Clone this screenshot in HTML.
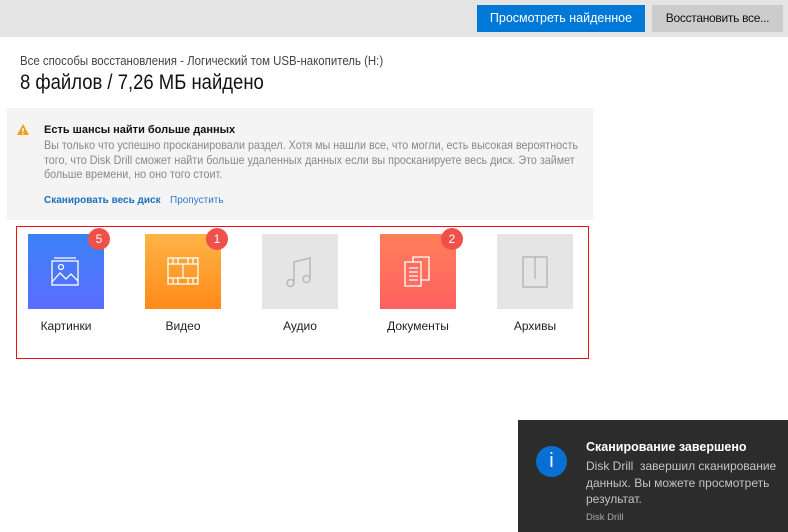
<!DOCTYPE html>
<html><head><meta charset="utf-8"><style>
*{margin:0;padding:0;box-sizing:border-box}
body{width:788px;height:532px;overflow:hidden;background:#fff;font-family:"Liberation Sans","DejaVu Sans",sans-serif;position:relative}
.a{position:absolute;white-space:nowrap}
.c{transform-origin:left center;transform:scaleX(.88)}
.tile{position:absolute;top:234px;width:76px;height:75px}
.lbl{position:absolute;top:319px;font-size:12px;color:#222;width:100px;text-align:center}
.badge{position:absolute;top:228px;width:22px;height:22px;border-radius:50%;background:#f0504a;color:#fff;font-size:12px;text-align:center;line-height:22px}
</style></head><body>
<div class="a" style="left:0;top:0;width:788px;height:37px;background:#e4e4e4"></div>
<div class="a" style="left:477px;top:5px;width:168px;height:27px;background:#0078d7;color:#fff;font-size:12.5px;line-height:27px;text-align:center">Просмотреть найденное</div>
<div class="a" style="left:652px;top:5px;width:131px;height:27px;background:#cccccc;color:#111;font-size:12px;line-height:27px;text-align:center;letter-spacing:-.3px">Восстановить все...</div>
<div class="a c" style="left:20px;top:53px;font-size:13px;color:#444">Все способы восстановления - Логический том USB-накопитель (H:)</div>
<div class="a c" style="left:20px;top:71px;font-size:21px;color:#111">8 файлов / 7,26 МБ найдено</div>
<div class="a" style="left:7px;top:108px;width:586px;height:112px;background:#f4f4f4"></div>
<svg class="a" style="left:17px;top:124px" width="12" height="11"><path d="M6 0L12 11H0Z" fill="#f0a020"/><rect x="5.3" y="4" width="1.4" height="4" fill="#fff"/><rect x="5.3" y="9" width="1.4" height="1.2" fill="#fff"/></svg>
<div class="a" style="left:44px;top:124px;font-size:11px;font-weight:bold;color:#111">Есть шансы найти больше данных</div>
<div class="a" style="left:44px;top:138px;font-size:12px;color:#888;line-height:14.5px;transform-origin:left center;transform:scaleX(.895)">Вы только что успешно просканировали раздел. Хотя мы нашли все, что могли, есть высокая вероятность<br>того, что Disk Drill сможет найти больше удаленных данных если вы просканируете весь диск. Это займет<br>больше времени, но оно того стоит.</div>
<div class="a" style="left:44px;top:195px;font-size:10px;color:#1a6fc0;font-weight:bold">Сканировать весь диск</div>
<div class="a" style="left:170px;top:195px;font-size:10px;color:#2a7ad0">Пропустить</div>
<div class="a" style="left:16px;top:226px;width:573px;height:133px;border:1.5px solid #f01010"></div>
<div class="tile" style="left:28px;background:linear-gradient(#3b82f6,#5b6cff)"></div>
<svg class="a" style="left:50px;top:255px" width="32" height="32" fill="none" stroke="#fff" stroke-width="1.3"><rect x="2" y="6" width="26" height="24"/><path d="M4 3h22"/><path d="M2 27l8-9 6 6 5-5 7 7"/><circle cx="11" cy="12" r="2.5"/></svg>
<div class="tile" style="left:145px;background:linear-gradient(#ffb347,#ff8a18)"></div>
<svg class="a" style="left:167px;top:257px" width="32" height="28" fill="none" stroke="#fff" stroke-width="1.3"><rect x="1" y="1" width="30" height="26"/><path d="M1 7h30M1 21h30M16 7v14M6 1v6M11 1v6M21 1v6M26 1v6M6 21v6M11 21v6M21 21v6M26 21v6"/></svg>
<div class="tile" style="left:262px;background:#e5e5e5"></div>
<svg class="a" style="left:285px;top:255px" width="32" height="34" fill="none" stroke="#b8b8b8" stroke-width="1.5"><path d="M9 28V7l16-4v21"/><circle cx="5.5" cy="28" r="3.5"/><circle cx="21.5" cy="24" r="3.5"/></svg>
<div class="tile" style="left:380px;background:linear-gradient(#ff7f5a,#ff6060)"></div>
<svg class="a" style="left:402px;top:255px" width="32" height="32" fill="none" stroke="#fff" stroke-width="1.3"><rect x="11" y="2" width="16" height="23"/><rect x="3" y="7" width="16" height="24" fill="#ff6d5e"/><path d="M7 13h9M7 17h9M7 21h9M7 25h9"/></svg>
<div class="tile" style="left:497px;background:#e5e5e5"></div>
<svg class="a" style="left:521px;top:256px" width="28" height="32" fill="none" stroke="#b8b8b8" stroke-width="1.5"><rect x="2" y="1" width="24" height="30"/><path d="M14 1v22"/></svg>
<div class="badge" style="left:88px">5</div>
<div class="badge" style="left:206px">1</div>
<div class="badge" style="left:441px">2</div>
<div class="lbl" style="left:16px">Картинки</div>
<div class="lbl" style="left:133px">Видео</div>
<div class="lbl" style="left:250px">Аудио</div>
<div class="lbl" style="left:368px">Документы</div>
<div class="lbl" style="left:485px">Архивы</div>
<div class="a" style="left:518px;top:420px;width:270px;height:112px;background:#2c2c2c"></div>
<div class="a" style="left:536px;top:446px;width:31px;height:31px;border-radius:50%;background:#0a6fd3;color:#fff;font-size:20px;text-align:center;line-height:31px">i</div>
<div class="a" style="left:586px;top:440px;font-size:12.5px;font-weight:bold;color:#fff">Сканирование завершено</div>
<div class="a" style="left:586px;top:458px;font-size:12px;color:#c4c4c4;line-height:16.5px">Disk Drill&nbsp; завершил сканирование<br>данных. Вы можете просмотреть<br>результат.</div>
<div class="a" style="left:586px;top:512px;font-size:9.5px;color:#aaa">Disk Drill</div>
</body></html>
